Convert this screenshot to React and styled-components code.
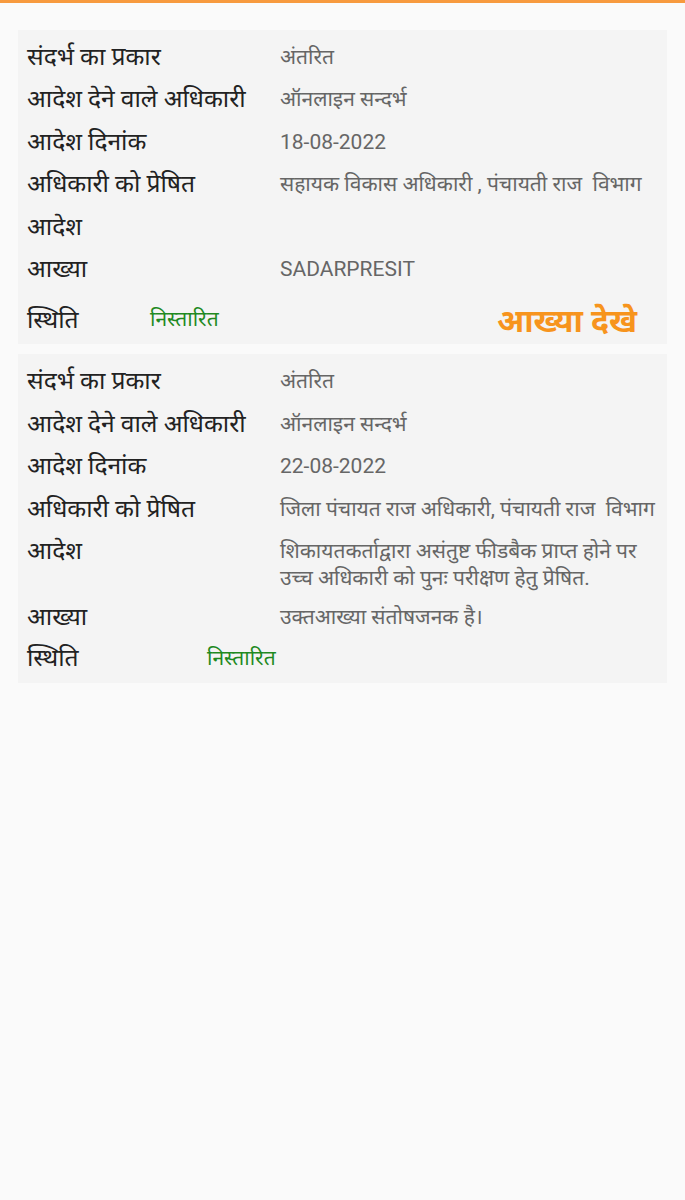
import React from "react";
import styled, { createGlobalStyle } from "styled-components";

const Global = createGlobalStyle`
  html, body { margin: 0; padding: 0; background: #fafafa; }
  body { font-family: Roboto, "Noto Sans", "Noto Sans Devanagari", sans-serif; }
`;

const Page = styled.div`
  min-height: 1200px;
  background: #fafafa;
  border-top: 3px solid #f79a3e;
  box-sizing: border-box;
  padding: 27px 18px 0;
  display: flex;
  flex-direction: column;
  gap: 10px;
`;

const Card = styled.div`
  background: #f4f4f4;
  padding: 6px 10px 0 9px;
  display: flex;
  flex-direction: column;
`;

const Row = styled.div`
  display: flex;
  align-items: flex-start;
  padding: 6px 0;
`;

const Label = styled.div`
  width: 253px;
  flex-shrink: 0;
  font-size: 24.6px;
  line-height: 30.4px;
  color: #222;
`;

const Value = styled.div`
  flex: 1;
  font-size: 21px;
  line-height: 27px;
  padding-top: 2px;
  margin-bottom: -2px;
  color: #666;
  white-space: pre-wrap;
`;

const StatusRow = styled.div`
  display: flex;
  align-items: center;
  padding: 5px 0 ${(p) => p.$pb}px;
  min-height: ${(p) => p.$h}px;
`;

const StatusLabel = styled.div`
  width: ${(p) => p.$w}px;
  flex-shrink: 0;
  font-size: 24.6px;
  line-height: 30px;
  color: #222;
`;

const StatusValue = styled.div`
  flex: 1;
  font-size: 21px;
  line-height: 27px;
  color: #1f8a1f;
`;

const ViewLink = styled.a`
  font-size: 32px;
  font-weight: 700;
  color: #f7941d;
  margin-right: 20px;
  cursor: pointer;
  text-decoration: none;
`;

const data = [
  {
    rows: [
      ["संदर्भ का प्रकार", "अंतरित"],
      ["आदेश देने वाले अधिकारी", "ऑनलाइन सन्दर्भ"],
      ["आदेश दिनांक", "18-08-2022"],
      ["अधिकारी को प्रेषित", "सहायक विकास अधिकारी , पंचायती राज  विभाग"],
      ["आदेश", ""],
      ["आख्या", "SADARPRESIT"],
    ],
    statusW: 123,
    link: true,
  },
  {
    rows: [
      ["संदर्भ का प्रकार", "अंतरित"],
      ["आदेश देने वाले अधिकारी", "ऑनलाइन सन्दर्भ"],
      ["आदेश दिनांक", "22-08-2022"],
      ["अधिकारी को प्रेषित", "जिला पंचायत राज अधिकारी, पंचायती राज  विभाग"],
      ["आदेश", "शिकायतकर्ताद्वारा असंतुष्ट फीडबैक प्राप्त होने पर उच्च अधिकारी को पुनः परीक्षण हेतु प्रेषित."],
      ["आख्या", "उक्तआख्या संतोषजनक है।"],
    ],
    statusW: 180,
    link: false,
  },
];

export default function App() {
  return (
    <>
      <Global />
      <Page>
        {data.map((c, i) => (
          <Card key={i}>
            {c.rows.map(([l, v], j) => (
              <Row key={j}>
                <Label>{l}</Label>
                <Value>{v}</Value>
              </Row>
            ))}
            <StatusRow $h={c.link ? 49 : 30} $pb={c.link ? 0 : 10}>
              <StatusLabel $w={c.statusW}>स्थिति</StatusLabel>
              <StatusValue>निस्तारित</StatusValue>
              {c.link && <ViewLink>आख्या देखे</ViewLink>}
            </StatusRow>
          </Card>
        ))}
      </Page>
    </>
  );
}
